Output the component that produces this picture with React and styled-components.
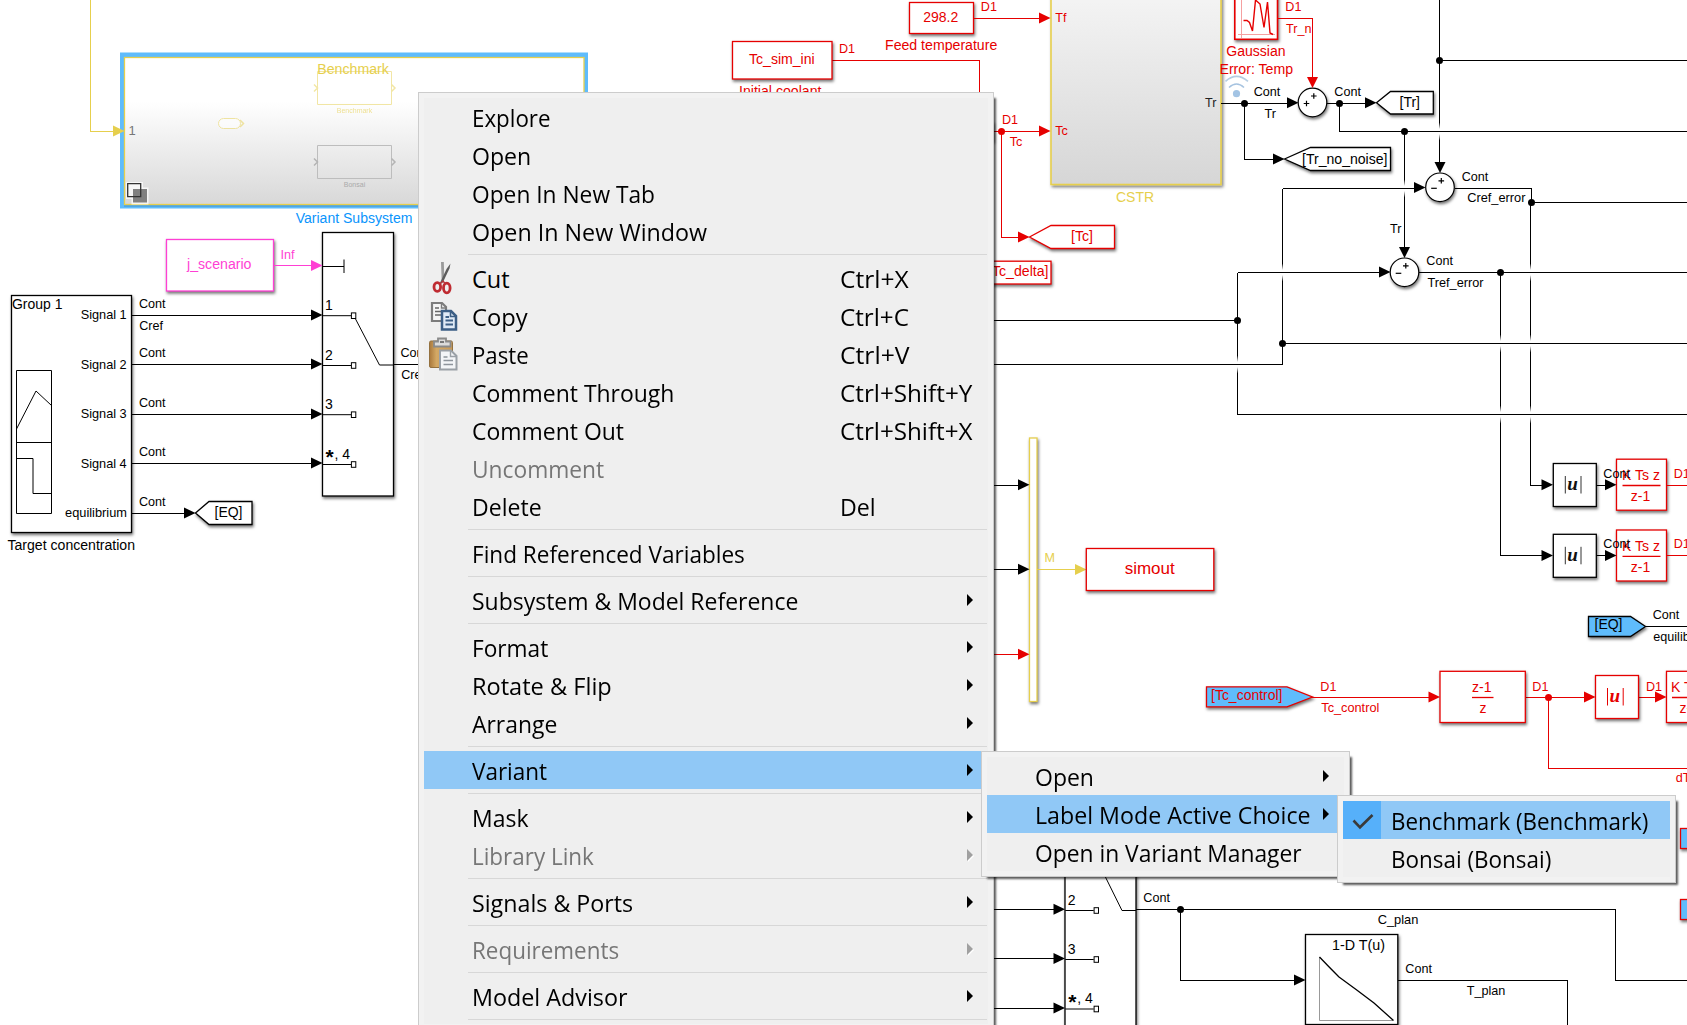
import React, { useLayoutEffect, useRef, useState } from 'react';
import styled, { createGlobalStyle, css } from 'styled-components';

const RED = '#e60000';
const INK = '#000000';
const GOLD = '#e6cf4d';
const PINK = '#ff3fd4';
const BLUE = '#5fbcfc';

const GlobalStyle = createGlobalStyle`
  html, body { margin: 0; padding: 0; background: #fff; overflow: hidden; }
  * { box-sizing: border-box; }
`;

const Screen = styled.main`
  position: relative;
  width: 1687px;
  height: 1025px;
  overflow: hidden;
  background: #ffffff;
`;

/* ---------- diagram primitives ---------- */

const Canvas = styled.svg`
  display: block;
  font-family: 'Liberation Sans', Arial, sans-serif;
`;

const Wire = styled.path`
  fill: none;
  stroke: ${(p) => p.$c || INK};
  stroke-width: 1;
  shape-rendering: crispEdges;
`;

const Stroke = styled.path`
  fill: none;
  stroke: ${(p) => p.$c || INK};
  stroke-width: ${(p) => p.$w || 1};
`;

const Solid = styled.path`
  fill: ${(p) => p.$c || INK};
`;

const Junction = styled.circle`
  fill: ${(p) => p.$c || INK};
`;

const shadow = css`
  filter: drop-shadow(1.5px 2px 1.5px rgba(0, 0, 0, 0.55));
`;

const Block = styled.rect`
  fill: ${(p) => p.$fill || '#fff'};
  stroke: ${(p) => p.$c || INK};
  stroke-width: ${(p) => p.$w || 1.3};
  ${shadow}
`;

const Tag = styled.path`
  fill: ${(p) => p.$fill || '#fff'};
  stroke: ${(p) => p.$c || INK};
  stroke-width: 1.3;
  ${shadow}
`;

const Ring = styled.circle`
  fill: #fff;
  stroke: #000;
  stroke-width: 1.2;
  ${shadow}
`;

const TextNode = styled.text`
  font-size: ${(p) => p.$size}px;
  font-weight: ${(p) => (p.$bold ? 'bold' : 'normal')};
  fill: ${(p) => p.$c};
  opacity: ${(p) => p.$o || 1};
`;

const UNode = styled.text`
  font: italic bold 19px 'Liberation Serif', 'Times New Roman', serif;
  fill: ${(p) => p.$c || '#111'};
  text-anchor: middle;
`;

const Label = ({ x, y, w, s = 12.6, c = INK, o, a, bold, children }) => (
  <TextNode
    x={x}
    y={y}
    $size={s}
    $c={c}
    $o={o}
    $bold={bold}
    textAnchor={a}
    textLength={w}
    lengthAdjust={w ? 'spacingAndGlyphs' : undefined}
  >
    {children}
  </TextNode>
);

const Head = ({ x, y, c, down }) => (
  <Solid
    $c={c}
    d={down ? `M${x - 5.5} ${y}h11l-5.5 11z` : `M${x} ${y - 5.5}v11l11.5 -5.5z`}
  />
);

const Box = ({ x1, y1, x2, y2, c, ...rest }) => (
  <Block x={x1} y={y1} width={x2 - x1} height={y2 - y1} $c={c} {...rest} />
);

const Hop = ({ x, y }) => <rect x={x - 1.5} y={y - 9} width="3" height="18" fill="url(#hop)" />;

const Sum = ({ x, y, minus }) => (
  <g>
    <Ring cx={x} cy={y} r="14.3" />
    <Stroke $w={1.2} d={`M${x - 1.5} ${y - 6.5}h5.6M${x + 1.3} ${y - 9.3}v5.6`} />
    <Stroke $w={1.2} d={`M${x - 8.8} ${y + 1}h5.6${minus ? '' : `m-2.8 -2.8v5.6`}`} />
  </g>
);

const SwitchPort = ({ x, y, name }) => (
  <g>
    <Stroke d={`M${x} ${y}h28.5`} />
    <rect x={x + 28.9} y={y - 2.8} width="4.4" height="5.6" fill="#fff" stroke="#000" />
    {name === '*, 4' ? (
      <>
        <Label x={x + 3} y={y - 0.5} s={21} bold>*</Label>
        <Label x={x + 12} y={y - 6} s={14}>, 4</Label>
      </>
    ) : (
      <Label x={x + 2.5} y={y - 5.5} s={14}>{name}</Label>
    )}
  </g>
);

const AbsBlock = ({ x, y, c }) => (
  <g>
    <Box x1={x} y1={y} x2={x + 43} y2={y + 43} c={c} />
    <Stroke $c={c || '#333'} d={`M${x + 12} ${y + 12.5}v17.5M${x + 27.7} ${y + 12.5}v17.5`} />
    <UNode x={x + 19.3} y={y + 26.7} $c={c}>u</UNode>
  </g>
);

const Derivative = ({ x, y }) => (
  <g>
    <Box x1={x} y1={y} x2={x + 50} y2={y + 51} c={RED} />
    <Label x={x + 5.5} y={y + 20.5} s={14} w={38} c={RED}>K Ts z</Label>
    <Stroke $c={RED} $w={1.3} d={`M${x + 6} ${y + 26.3}h38`} />
    <Label x={x + 24} y={y + 41.5} s={14} a="middle" c={RED}>z-1</Label>
  </g>
);

function SourceSide() {
  return (
    <g>
      <Wire $c={GOLD} d="M90.5 0V131.5H114" />

      <rect x="120" y="52.5" width="468" height="156" fill={BLUE} />
      <rect x="124" y="204" width="464" height="3" fill="#3f8fc4" opacity=".45" />
      <rect x="124.5" y="57.5" width="459.5" height="147" fill="url(#shade)" stroke={GOLD} strokeWidth="1.3" />
      <Head x={113} y={131} c={GOLD} />
      <Label x={128.5} y={135} s={13} c="#777">1</Label>
      <Label x={317.3} y={74} s={14} w={71.5} c={GOLD}>Benchmark</Label>
      <g opacity=".5">
        <Stroke $c={GOLD} d="M317.5 71.5h74v33h-74z" />
        <Stroke $c={GOLD} $w={1.5} d="M314 84.5l3.5 3.5l-3.5 3.5M391.5 84.5l3.5 3.5l-3.5 3.5" />
        <rect x="218.5" y="118.5" width="22" height="10" rx="5" fill="#fff" stroke={GOLD} />
        <Stroke $c={GOLD} $w={1.5} d="M240 120l3.5 3.5l-3.5 3.5" />
      </g>
      <Label x={354.5} y={113} s={7} a="middle" c={GOLD} o={0.6}>Benchmark</Label>
      <Stroke $c="#bdbdbd" d="M317.5 145.5h74v33h-74z" />
      <Stroke $c="#b4b4b4" $w={1.5} d="M314 158.5l3.5 3.5l-3.5 3.5M391.5 158.5l3.5 3.5l-3.5 3.5" />
      <Label x={354.5} y={187} s={7} a="middle" c="#aaa">Bonsai</Label>

      <path d="M126 182h17v5.5h5.5v17h-17v-5.5h-5.5z" fill="#fff" opacity=".75" />
      <rect x="133" y="189" width="14" height="13.5" fill="#808080" />
      <Stroke $w={1.3} $c="#333" d="M127.7 183.7h13v13h-13z" />
      <Label x={295.7} y={222.5} s={14} w={116.7} c="#0a94fc">Variant Subsystem</Label>

      <Box x1={166.5} y1={239.5} x2={273.5} y2={291} c={PINK} />
      <Label x={187} y={269} s={14} w={64.5} c={PINK}>j_scenario</Label>
      <Label x={280.5} y={258.5} c={PINK}>Inf</Label>
      <Wire $c={PINK} d="M274 265.5H312" />

      <Box x1={322.5} y1={232.5} x2={393.5} y2={496} />
      <Head x={311} y={265.5} c={PINK} />
      <Stroke d="M322 266.5H344M344 259.5v13.5" />
      <Stroke d="M354.5 317L379.5 365H393" />
      <SwitchPort x={322.5} y={315.7} name="1" />
      <SwitchPort x={322.5} y={365.5} name="2" />
      <SwitchPort x={322.5} y={414.7} name="3" />
      <SwitchPort x={322.5} y={464.5} name="*, 4" />
      <Wire d="M393 364.5H418" />
      <Label x={400.5} y={357}>Cont</Label>
      <Label x={401.2} y={379}>Cref</Label>

      <Box x1={11.5} y1={295.5} x2={131.5} y2={532.5} />
      <Label x={12} y={309.2} s={14} w={50.5}>Group 1</Label>
      <Label x={80.7} y={319.2} w={46}>Signal 1</Label>
      <Label x={80.7} y={369} w={46}>Signal 2</Label>
      <Label x={80.7} y={418.3} w={46}>Signal 3</Label>
      <Label x={80.7} y={468} w={46}>Signal 4</Label>
      <Label x={65} y={517.3} w={62}>equilibrium</Label>
      <Stroke d="M16.5 370.5h35v143h-35zM16.5 442.5h35M16.5 429L36 391L51.5 405.5M16.5 458.5h16.5v35h18.5" />
      <Label x={7.5} y={550.3} s={14} w={127.5}>Target concentration</Label>

      {[315.5, 364.5, 414.5, 463.5].map((y) => (
        <g key={y}>
          <Wire d={`M132 ${y}H312`} />
          <Head x={311} y={y - 0.5} />
        </g>
      ))}
      <Label x={139} y={308}>Cont</Label>
      <Label x={139.2} y={330}>Cref</Label>
      <Label x={139} y={357}>Cont</Label>
      <Label x={139} y={407}>Cont</Label>
      <Label x={139} y={456}>Cont</Label>
      <Label x={139} y={506}>Cont</Label>
      <Wire d="M132 513.5H185" />
      <Head x={184} y={513} />
      <Tag d="M195.5 513L209 501.5H252V524.5H209Z" />
      <Label x={214.5} y={517.3} s={14}>[EQ]</Label>
    </g>
  );
}

function ReactorSide() {
  return (
    <g>
      <Box x1={909.5} y1={2.5} x2={973.5} y2={33.5} c={RED} />
      <Label x={940.8} y={22.2} s={14} a="middle" c={RED}>298.2</Label>
      <Label x={980.8} y={11} c={RED}>D1</Label>
      <Label x={885} y={50.2} s={14} w={112.3} c={RED}>Feed temperature</Label>
      <Wire $c={RED} d="M974 18.5H1040M832 60.5H979.5V95" />
      <Box x1={732.5} y1={41.5} x2={832} y2={79} c={RED} />
      <Label x={749} y={64.3} s={14} w={65.7} c={RED}>Tc_sim_ini</Label>
      <Label x={839} y={53} c={RED}>D1</Label>
      <Label x={739} y={96} s={14} w={82.5} c={RED}>Initial coolant</Label>

      <rect x="1051" y="-100" width="170" height="284.5" fill="url(#reactor)" stroke={GOLD} strokeWidth="1.6" filter="url(#soft)" />
      <Head x={1039} y={18} c={RED} />
      <Head x={1039} y={131} c={RED} />
      <Label x={1055.3} y={22} c={RED}>Tf</Label>
      <Label x={1055.3} y={135.2} c={RED}>Tc</Label>
      <Label x={1116} y={202.3} s={14} a="start" c={GOLD}>CSTR</Label>
      <Label x={1002} y={124} c={RED}>D1</Label>
      <Label x={1009.7} y={146.3} c={RED}>Tc</Label>
      <Wire $c={RED} d="M994 131.5H1040M1001.5 131.5V237.5H1019" />
      <Junction cx="1001.5" cy="131.5" r="3.5" $c={RED} />
      <Head x={1018} y={237} c={RED} />
      <Tag $c={RED} d="M1029.5 237L1051 225.5H1114.5V248.5H1051Z" />
      <Label x={1071} y={241.3} s={14} w={22} c={RED}>[Tc]</Label>
      <Box x1={960} y1={261.2} x2={1051} y2={284} c={RED} />
      <Label x={988} y={276.3} s={14} w={60.5} c={RED}>[Tc_delta]</Label>
      <Box x1={930} y1={122} x2={993} y2={141} />

      <Box x1={1234.8} y1={-20} x2={1277.5} y2={39.3} c={RED} $w={1.6} />
      <Stroke $c="#f5a0a0" d="M1241.5 0V38M1238 34.5H1275" />
      <Stroke $c={RED} $w={1.4} d="M1243.5 20.5h3.5l2.5 2L1252.5 31L1255.5 0L1260 4L1264 27.5L1267.5 2L1270 33L1273 34.5" />
      <Label x={1285.3} y={11} c={RED}>D1</Label>
      <Label x={1286} y={33} c={RED}>Tr_n</Label>
      <Wire $c={RED} d="M1278 18.5H1312.5V78" />
      <Label x={1226.3} y={56.3} s={14} w={59.3} c={RED}>Gaussian</Label>
      <Label x={1219.5} y={73.5} s={14} w={73.5} c={RED}>Error: Temp</Label>
      <Junction cx="1236.5" cy="93.7" r="3.6" $c="#a3c4e4" />
      <Stroke $w={1.6} $c="#a6c3e0" d="M1229 87.5Q1236.5 80.5 1244 87.5" />
      <Stroke $w={1.6} $c="#b5cde2" d="M1225.5 81.3Q1236.5 71.5 1248 81.3" />

      <Label x={1205} y={106.5} c="#222">Tr</Label>
      <Wire d="M1221 103.5H1288M1327 103.5H1366M1244.5 103.5V159.5H1274M1339.5 103.5V131.5H1687" />
      <Head x={1287} y={102.7} />
      <Sum x={1312.5} y={102.5} />
      <Head x={1312.5} y={77} c={RED} down />
      <Junction cx="1244.5" cy="103.5" r="3.5" />
      <Junction cx="1339.5" cy="103.5" r="3.5" />
      <Label x={1253.7} y={96}>Cont</Label>
      <Label x={1264.5} y={118}>Tr</Label>
      <Label x={1334.3} y={96}>Cont</Label>
      <Head x={1365} y={102.7} />
      <Tag d="M1376.5 102.7L1390.5 91.5H1433.3V114H1390.5Z" />
      <Label x={1399.5} y={106.5} s={14} w={20.5}>[Tr]</Label>
      <Head x={1273} y={159} />
      <Tag d="M1284.5 159L1310.5 147.5H1390.5V170.5H1310.5Z" />
      <Label x={1302} y={163.5} s={14} w={85.5}>[Tr_no_noise]</Label>
    </g>
  );
}

function ErrorNetwork() {
  return (
    <g>
      <Wire d="M1439.5 0V164M1404.5 131.5V248M1282.5 188.5V364.5M1237.5 272.5V414.5M1530.5 202V485.5H1543M1531.5 188.5V202.5M1500.5 272.5V555.5H1543" />
      <Hop x={1439.5} y={131.5} />
      <Hop x={1404.5} y={188.5} />
      <Hop x={1282.5} y={272.5} />
      <Hop x={1237.5} y={364.5} />
      <Hop x={1530.5} y={272.5} />
      <Hop x={1530.5} y={343.5} />
      <Hop x={1530.5} y={414.5} />
      <Hop x={1500.5} y={343.5} />
      <Hop x={1500.5} y={414.5} />
      <Wire d="M1339.5 131.5H1687M1439 60.5H1687M1282.5 188.5H1415M1455 188.5H1531.5M1531 202.5H1687M1237.5 272.5H1380M1419 272.5H1687M994 320.5H1237.5M1282.5 343.5H1687M994 364.5H1282.5M1237.5 414.5H1687" />
      {[[1439.5, 60.5], [1404.5, 131.5], [1531.5, 202.5], [1500.5, 272.5], [1237.5, 320.5], [1282.5, 343.5]].map(
        ([x, y]) => (
          <Junction key={`${x}-${y}`} cx={x} cy={y} r="3.5" />
        ),
      )}
      <Sum x={1440} y={187.3} minus />
      <Head x={1440} y={162} down />
      <Head x={1414} y={187.5} />
      <Sum x={1404.5} y={272.3} minus />
      <Head x={1404.5} y={247} down />
      <Head x={1379} y={272} />
      <Label x={1461.7} y={181}>Cont</Label>
      <Label x={1467.2} y={202.2} w={58.3}>Cref_error</Label>
      <Label x={1390} y={233}>Tr</Label>
      <Label x={1426.3} y={265}>Cont</Label>
      <Label x={1427.5} y={287.2} w={56}>Tref_error</Label>

      <Head x={1541.5} y={484.7} />
      <Head x={1541.5} y={555.5} />
      <AbsBlock x={1553.3} y={463.5} />
      <AbsBlock x={1553.3} y={534.3} />
      <Derivative x={1616.5} y={459.2} />
      <Derivative x={1616.5} y={530} />
      <Wire d="M1596 485.5H1606M1596 555.5H1606" />
      <Head x={1605} y={484.7} />
      <Head x={1605} y={555.5} />
      <Label x={1603.3} y={478}>Cont</Label>
      <Label x={1603.3} y={548}>Cont</Label>
      <Wire $c={RED} d="M1667 485.5H1687M1667 555.5H1687" />
      <Label x={1673.7} y={478} c={RED}>D1</Label>
      <Label x={1673.7} y={548} c={RED}>D1</Label>
    </g>
  );
}

function OutputSide() {
  return (
    <g>
      <Box x1={1029.5} y1={438} x2={1037} y2={701.5} c={GOLD} />
      <Wire d="M994 485.5H1019M994 569.5H1019" />
      <Wire $c={RED} d="M994 654.5H1019" />
      <Head x={1018} y={484.7} />
      <Head x={1018} y={569.3} />
      <Head x={1018} y={654.3} c={RED} />
      <Label x={1044.5} y={562.3} c={GOLD}>M</Label>
      <Wire $c={GOLD} d="M1037 569.5H1076" />
      <Head x={1075} y={569.5} c={GOLD} />
      <Box x1={1086.3} y1={548.5} x2={1213.8} y2={590.5} c={RED} />
      <Label x={1124.7} y={574} s={16.6} w={50} c={RED}>simout</Label>

      <Tag $fill={BLUE} d="M1588.5 616.5H1630.5L1645.5 626.5L1630.5 636.5H1588.5Z" />
      <Label x={1594.5} y={629} s={14}>[EQ]</Label>
      <Wire d="M1645 626.5H1687" />
      <Label x={1652.7} y={619.3}>Cont</Label>
      <Label x={1653.3} y={641.3}>equilibrium</Label>

      <Tag $c={RED} $fill={BLUE} d="M1206.5 686.8H1287L1312.5 697L1287 706.8H1206.5Z" />
      <Label x={1211} y={700} s={14} w={71.5} c={RED}>[Tc_control]</Label>
      <Wire $c={RED} d="M1312 697.5H1430M1526 697.5H1585M1548.5 697.5V768.5H1687M1639 697.5H1656" />
      <Label x={1320.3} y={690.5} c={RED}>D1</Label>
      <Label x={1321.3} y={712.3} w={58} c={RED}>Tc_control</Label>
      <Head x={1428.5} y={697} c={RED} />
      <Box x1={1440} y1={671.3} x2={1525.3} y2={722.5} c={RED} />
      <Label x={1481.7} y={692.3} s={14} a="middle" c={RED}>z-1</Label>
      <Stroke $c={RED} $w={1.3} d="M1472 697.5h21.5" />
      <Label x={1483} y={713.3} s={14} a="middle" c={RED}>z</Label>
      <Label x={1532.3} y={690.5} c={RED}>D1</Label>
      <Junction cx="1548.5" cy="697.5" r="3.5" $c={RED} />
      <Head x={1584} y={697} c={RED} />
      <AbsBlock x={1595.5} y={675.5} c={RED} />
      <Label x={1646} y={690.5} c={RED}>D1</Label>
      <Box x1={1666.5} y1={671.3} x2={1716} y2={722.5} c={RED} />
      <Head x={1655} y={697} c={RED} />
      <Label x={1671} y={692.3} s={14} w={38} c={RED}>K Ts z</Label>
      <Stroke $c={RED} $w={1.3} d="M1672 697.5h38" />
      <Label x={1679.5} y={713.3} s={14} c={RED}>z-1</Label>
      <Label x={1675.7} y={782.3} c={RED}>dTc</Label>
      <Box x1={1680.5} y1={828.5} x2={1720} y2={848.5} c={RED} $fill={BLUE} />
      <Box x1={1680.5} y1={899.5} x2={1720} y2={919.5} c={RED} $fill={BLUE} />
    </g>
  );
}

function PlannerSide() {
  return (
    <g>
      <Box x1={1065} y1={776} x2={1136} y2={1060} />
      <Stroke d="M1097 860L1122 910.5H1136" />
      <SwitchPort x={1065.2} y={910.5} name="2" />
      <SwitchPort x={1065.2} y={959.5} name="3" />
      <SwitchPort x={1065.2} y={1009} name="*, 4" />
      <Wire d="M994 909.5H1055M994 958.5H1055M994 1008.5H1055" />
      <Head x={1053.5} y={909.2} />
      <Head x={1053.5} y={958.5} />
      <Head x={1053.5} y={1008} />
      <Label x={1143.3} y={902}>Cont</Label>
      <Wire d="M1136 909.5H1615.5V980.5H1687M1180.5 909.5V980.5H1295M1398 980.5H1567.5V1025" />
      <Junction cx="1180.5" cy="909.5" r="3.5" />
      <Head x={1294} y={980} />
      <Label x={1377.7} y={924} w={40.7}>C_plan</Label>
      <Box x1={1305.5} y1={934.5} x2={1397.8} y2={1024.5} />
      <Label x={1332} y={949.5} s={14} w={53}>1-D T(u)</Label>
      <Stroke $c="#999" d="M1319.5 957V1020.5H1393" />
      <Stroke $w={1.3} d="M1319.5 957Q1329 967 1339 977Q1357 990 1374 1003L1393.5 1020.5" />
      <Label x={1405.3} y={973.3}>Cont</Label>
      <Label x={1466.7} y={995.2} w={38.7}>T_plan</Label>
    </g>
  );
}

const Diagram = () => (
  <Canvas width="1687" height="1025" viewBox="0 0 1687 1025">
    <defs>
      <linearGradient id="shade" x1="0" y1="0" x2="0" y2="1">
        <stop offset=".3" stopColor="#fff" />
        <stop offset="1" stopColor="#d8d8d8" />
      </linearGradient>
      <linearGradient id="reactor" x1="0" y1="0" x2="0" y2="1">
        <stop offset=".2" stopColor="#fafafa" />
        <stop offset="1" stopColor="#d6d6d6" />
      </linearGradient>
      <linearGradient id="hop" x1="0" y1="0" x2="0" y2="1">
        <stop offset="0" stopColor="#fff" stopOpacity="0" />
        <stop offset=".36" stopColor="#fff" />
        <stop offset=".64" stopColor="#fff" />
        <stop offset="1" stopColor="#fff" stopOpacity="0" />
      </linearGradient>
      <filter id="soft" x="-5%" y="-5%" width="110%" height="110%">
        <feDropShadow dx="1.5" dy="2" stdDeviation="1.5" floodOpacity=".5" />
      </filter>
    </defs>
    <SourceSide />
    <ReactorSide />
    <ErrorNetwork />
    <OutputSide />
    <PlannerSide />
  </Canvas>
);

/* ---------- context menus ---------- */

const Menu = styled.ul`
  position: absolute;
  left: ${(p) => p.$left}px;
  top: ${(p) => p.$top}px;
  width: ${(p) => p.$width}px;
  display: flex;
  flex-direction: column;
  margin: 0;
  padding: 5px;
  list-style: none;
  font-family: 'Open Sans', 'Noto Sans', sans-serif;
  background: #efefef;
  border: 1px solid #cccccc;
  box-shadow: 4px 4px 2px -2px rgba(0, 0, 0, 0.65), inset 0 0 0 5px #f2f2f2;
`;

const Item = styled.li`
  display: flex;
  flex: none;
  align-items: center;
  height: 38px;
  color: ${(p) => (p.$disabled ? '#767676' : '#000')};
  background: ${(p) => (p.$active ? '#90c8f6' : 'transparent')};
`;

const IconCell = styled.span`
  flex: none;
  width: 38px;
  height: 38px;
  margin-right: 10px;
  background: ${(p) => (p.$checked ? '#56b0fa' : 'transparent')};
  svg { display: block; }
`;

const Caption = styled.span`
  display: block;
  width: ${(p) => p.$width}px;
  height: 38px;
  flex: none;
  padding-top: 1px;
  font-size: 23.5px;
  line-height: 38px;
  white-space: nowrap;
`;

const Squeeze = styled.span`
  display: inline-block;
  transform-origin: 0 50%;
`;

const Divider = styled.li`
  flex: none;
  height: 1px;
  margin: 4px 1px 4px 44px;
  background: #d7d7d7;
`;

const Arrow = styled.span`
  flex: none;
  width: 0;
  height: 0;
  margin-left: auto;
  margin-right: 15px;
  margin-bottom: 1px;
  border-style: solid;
  border-width: 6px 0 6px 6px;
  border-color: transparent transparent transparent ${(p) => (p.$disabled ? '#a0a0a0' : '#000')};
  filter: ${(p) => (p.$disabled ? 'drop-shadow(1px 1px 0 #fff)' : 'none')};
`;

/* Condenses a caption so that it fills the given width. */
function Fitted({ width, box, children }) {
  const ref = useRef(null);
  const [scale, setScale] = useState(1);
  useLayoutEffect(() => {
    const natural = ref.current.offsetWidth;
    if (natural) setScale((width + 2) / natural);
  }, [width]);
  return (
    <Caption $width={box}>
      <Squeeze ref={ref} style={{ transform: `scaleX(${scale})` }}>{children}</Squeeze>
    </Caption>
  );
}

const ScissorsIcon = () => (
  <svg width="38" height="38" viewBox="0 0 38 38" fill="none">
    <path d="M17 3l2.8 0l.5 17l-2.5 5z" fill="#9a9a9a" />
    <path d="M26.5 4.5l-1 5l-6.5 13.5l-3.500 2l7-15z" fill="#5c5c5c" />
    <ellipse cx="13.3" cy="28" rx="3.3" ry="4.3" stroke="#bf2b31" strokeWidth="2.8" />
    <ellipse cx="22.8" cy="29" rx="3.3" ry="4.8" stroke="#bf2b31" strokeWidth="2.8" />
    <path d="M16 25l3-3l2.5 3" stroke="#b5363b" strokeWidth="1.5" />
  </svg>
);

const CopyIcon = () => (
  <svg width="38" height="38" viewBox="0 0 38 38" fill="none">
    <path d="M8 6h10l4 4v14H8z" fill="#f4f4f4" stroke="#7c7c7c" strokeWidth="2.2" />
    <path d="M17.5 6v5h5" stroke="#7c7c7c" strokeWidth="1.4" />
    <path d="M11 11h4M11 14.500h8M11 18h7" stroke="#666" strokeWidth="1.7" />
    <path d="M18 14h9l5 5v13.5H18z" fill="#dfeaf6" stroke="#3c5f86" strokeWidth="2.500" />
    <path d="M26.5 14v5.5h5.5" stroke="#3c5f86" strokeWidth="1.6" />
    <path d="M21.5 20h3.5M21.5 23.5h7.5M21.5 27.5h7.5" stroke="#3c5f86" strokeWidth="2" />
  </svg>
);

const PasteIcon = () => (
  <svg width="38" height="38" viewBox="0 0 38 38" fill="none">
    <defs>
      <linearGradient id="board" x1="0" y1="0" x2="1" y2="0">
        <stop offset="0" stopColor="#a9783c" />
        <stop offset=".3" stopColor="#d3a864" />
        <stop offset="1" stopColor="#c99a58" />
      </linearGradient>
    </defs>
    <rect x="5.5" y="6" width="23" height="26.5" rx="1.5" fill="url(#board)" stroke="#94713f" />
    <path d="M10 6.5h4V3.5h8v3h4.5v5H10z" fill="#dcdcdc" stroke="#8a8a8a" strokeWidth="1.8" />
    <path d="M16 7h4" stroke="#777" strokeWidth="2" />
    <path d="M16 15.5h11l5.5 5.5v13.5H16z" fill="#f3f5f7" stroke="#9aa0a6" strokeWidth="2" />
    <path d="M26.5 15.5v6h6" stroke="#9aa0a6" strokeWidth="1.4" />
    <path d="M19.5 22h4M19.5 25.5h9.5M19.5 29.5h9.5" stroke="#8d949b" strokeWidth="1.7" />
  </svg>
);

const CheckIcon = () => (
  <svg width="38" height="38" viewBox="0 0 38 38" fill="none">
    <path d="M10.5 19.5l6.5 6.800l12.500-12.300" stroke="#3a3a3a" strokeWidth="2.600" />
  </svg>
);

const MAIN = [
  { text: 'Explore', w: 76.9 },
  { text: 'Open', w: 57 },
  { text: 'Open In New Tab', w: 181 },
  { text: 'Open In New Window', w: 232.7 },
  null,
  { text: 'Cut', w: 36, keys: 'Ctrl+X', kw: 67, icon: <ScissorsIcon /> },
  { text: 'Copy', w: 53.6, keys: 'Ctrl+C', kw: 67, icon: <CopyIcon /> },
  { text: 'Paste', w: 54.7, keys: 'Ctrl+V', kw: 67.4, icon: <PasteIcon /> },
  { text: 'Comment Through', w: 200.2, keys: 'Ctrl+Shift+Y', kw: 130.1 },
  { text: 'Comment Out', w: 150.4, keys: 'Ctrl+Shift+X', kw: 130.9 },
  { text: 'Uncomment', w: 129.7, disabled: true },
  { text: 'Delete', w: 67.7, keys: 'Del', kw: 33.5 },
  null,
  { text: 'Find Referenced Variables', w: 270.6 },
  null,
  { text: 'Subsystem & Model Reference', w: 324.5, sub: true },
  null,
  { text: 'Format', w: 74.2, sub: true },
  { text: 'Rotate & Flip', w: 137.4, sub: true },
  { text: 'Arrange', w: 83.8, sub: true },
  null,
  { text: 'Variant', w: 72.7, sub: true, active: true },
  null,
  { text: 'Mask', w: 54.7, sub: true },
  { text: 'Library Link', w: 120.2, sub: true, disabled: true },
  null,
  { text: 'Signals & Ports', w: 159.2, sub: true },
  null,
  { text: 'Requirements', w: 145, sub: true, disabled: true },
  null,
  { text: 'Model Advisor', w: 153.8, sub: true },
  null,
];

const VARIANT = [
  { text: 'Open', w: 56.7, sub: true },
  { text: 'Label Mode Active Choice', w: 273.5, sub: true, active: true },
  { text: 'Open in Variant Manager', w: 265 },
];

const CHOICES = [
  { text: 'Benchmark (Benchmark)', w: 255, active: true, checked: true, icon: <CheckIcon /> },
  { text: 'Bonsai (Bonsai)', w: 158.5 },
];

const ContextMenu = ({ left, top, width, items }) => (
  <Menu $left={left} $top={top} $width={width}>
    {items.map((item, i) =>
      item === null ? (
        <Divider key={i} />
      ) : (
        <Item key={i} $active={item.active} $disabled={item.disabled}>
          <IconCell $checked={item.checked}>{item.icon}</IconCell>
          <Fitted width={item.w} box={item.keys ? 368 : item.w}>{item.text}</Fitted>
          {item.keys && <Fitted width={item.kw} box={item.kw}>{item.keys}</Fitted>}
          {item.sub && <Arrow $disabled={item.disabled} />}
        </Item>
      ),
    )}
  </Menu>
);

export default function App() {
  return (
    <Screen>
      <GlobalStyle />
      <Diagram />
      <ContextMenu left={418} top={92} width={576} items={MAIN} />
      <ContextMenu left={981} top={751} width={369} items={VARIANT} />
      <ContextMenu left={1337} top={795} width={339} items={CHOICES} />
    </Screen>
  );
}
